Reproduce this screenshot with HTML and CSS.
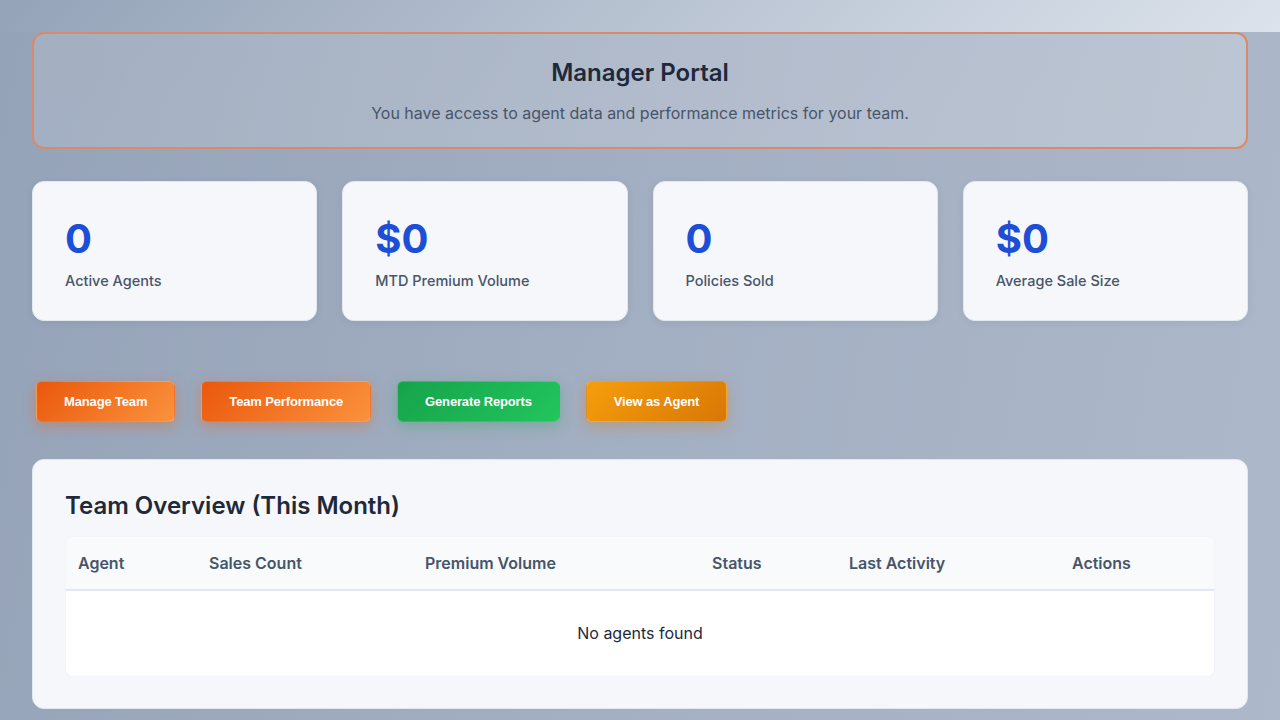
FILE: index.html
```html
<!DOCTYPE html>
<html lang="en">
<head>
<meta charset="utf-8">
<title>Manager Portal</title>
<link rel="stylesheet" href="styles.css">
</head>
<body>
<main class="page">
  <section class="portal-banner">
    <h1 class="portal-title">Manager Portal</h1>
    <p class="portal-sub">You have access to agent data and performance metrics for your team.</p>
  </section>

  <section class="stats">
    <div class="stat-card"><div class="stat-value">0</div><div class="stat-label">Active Agents</div></div>
    <div class="stat-card"><div class="stat-value">$0</div><div class="stat-label">MTD Premium Volume</div></div>
    <div class="stat-card"><div class="stat-value">0</div><div class="stat-label">Policies Sold</div></div>
    <div class="stat-card"><div class="stat-value">$0</div><div class="stat-label">Average Sale Size</div></div>
  </section>

  <section class="actions">
    <button class="btn btn-orange">Manage Team</button>
    <button class="btn btn-orange">Team Performance</button>
    <button class="btn btn-green">Generate Reports</button>
    <button class="btn btn-amber">View as Agent</button>
  </section>

  <section class="panel">
    <h2 class="panel-title">Team Overview (This Month)</h2>
    <div class="table-wrap">
      <table class="team-table">
        <thead>
          <tr>
            <th class="c-agent">Agent</th>
            <th class="c-sales">Sales Count</th>
            <th class="c-prem">Premium Volume</th>
            <th class="c-status">Status</th>
            <th class="c-last">Last Activity</th>
            <th class="c-act">Actions</th>
          </tr>
        </thead>
        <tbody>
          <tr><td class="empty" colspan="6">No agents found</td></tr>
        </tbody>
      </table>
    </div>
  </section>
</main>
</body>
</html>
```

FILE: styles.css
```css
* { box-sizing: border-box; }

html, body {
  margin: 0;
  padding: 0;
}

body {
  font-family: Inter, "Noto Sans", sans-serif;
  color: #1e293b;
  background: linear-gradient(135deg, #94a3b8 0%, #e2e8f0 70%, #f1f5f9 100%);
  min-height: 720px;
  overflow: hidden;
}

.page {
  margin-top: 32px;
  padding: 0 32px 32px;
  background: linear-gradient(100deg, #95a3b8 0%, #a3afc2 50%, #adb9ca 100%);
  min-height: 720px;
}

.portal-banner {
  border: 2px solid #d98a68;
  border-radius: 12px;
  background: linear-gradient(135deg, rgba(255,255,255,0.12), rgba(255,255,255,0.2));
  padding: 25px 24px 22px;
  text-align: center;
}

.portal-title {
  margin: 0 0 14px;
  font-size: 24px;
  line-height: 28px;
  font-weight: 600;
  color: #1e293b;
}

.portal-sub {
  margin: 0;
  font-size: 16px;
  line-height: 24px;
  color: #475569;
}

.stats {
  display: grid;
  grid-template-columns: repeat(4, 1fr);
  gap: 25px;
  margin-top: 32px;
}

.stat-card {
  background: #f5f7fa;
  border: 1px solid #e2e8f0;
  border-radius: 12px;
  padding: 32px 32px 29px;
  box-shadow: 0 2px 8px rgba(15, 23, 42, 0.06);
}

.stat-value {
  font-size: 40px;
  line-height: 50px;
  font-weight: 700;
  color: #1d4ed8;
}

.stat-label {
  margin-top: 7px;
  font-size: 14.5px;
  line-height: 20px;
  font-weight: 500;
  color: #475569;
}

.actions {
  display: flex;
  gap: 26px;
  padding: 0 4px;
  margin: 60px 0 37px;
}

.btn {
  font-family: "Liberation Sans", Arial, sans-serif;
  font-size: 13px;
  font-weight: 700;
  line-height: 15px;
  letter-spacing: -0.15px;
  color: #fff;
  padding: 12px 27px;
  border-radius: 6px;
  border: 1px solid rgba(255,255,255,0.15);
  cursor: pointer;
}

.btn-orange {
  background: linear-gradient(135deg, #ea580c 0%, #fb923c 100%);
  box-shadow: 0 4px 14px rgba(234, 88, 12, 0.35);
}

.btn-green {
  background: linear-gradient(135deg, #16a34a 0%, #22c55e 100%);
  box-shadow: 0 4px 14px rgba(22, 163, 74, 0.3);
}

.btn-amber {
  background: linear-gradient(135deg, #f59e0b 0%, #d97706 100%);
  box-shadow: 0 4px 14px rgba(217, 119, 6, 0.35);
}

.panel {
  background: #f5f7fa;
  border: 1px solid #e2e8f0;
  border-radius: 12px;
  padding: 31px 32px 31px;
}

.panel-title {
  margin: 0 0 15px;
  font-size: 24px;
  line-height: 30px;
  font-weight: 600;
  color: #1e293b;
}

.table-wrap {
  background: #fff;
  border: 1px solid #f1f5f9;
  border-radius: 8px;
  overflow: hidden;
}

.team-table {
  width: 100%;
  border-collapse: collapse;
  table-layout: fixed;
}

.team-table th {
  background: #f8fafc;
  text-align: left;
  font-size: 16px;
  font-weight: 600;
  color: #475569;
  padding: 15px 12px;
  line-height: 22px;
  border-bottom: 2px solid #e2e8f0;
}

.c-agent { width: 131px; }
.c-sales { width: 216px; }
.c-prem { width: 287px; }
.c-status { width: 137px; }
.c-last { width: 223px; }

.team-table .empty {
  text-align: center;
  font-size: 16px;
  line-height: 22px;
  color: #1e293b;
  padding: 31px 12px 32px;
}
```
